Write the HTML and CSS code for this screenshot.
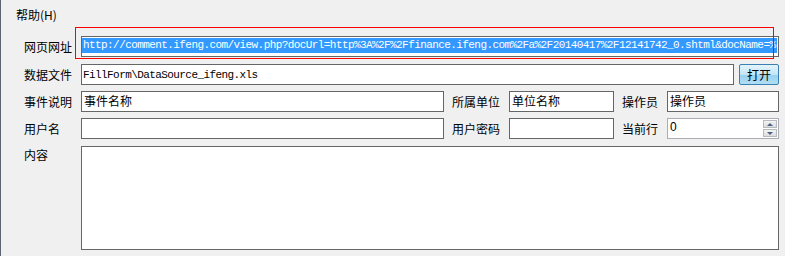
FILE: index.html
```html
<!DOCTYPE html>
<html lang="zh">
<head>
    <meta charset="UTF-8">
    <title>网页填表</title>
    <link rel="stylesheet" href="styles.css">
</head>
<body>

    <div class="menu-bar">
        <span class="menu-item">帮助(H)</span>
    </div>

    <div class="form">
        <div class="row">
            <label class="label">网页网址</label>
            <div class="field url-field"><span class="selected">http://comment.ifeng.com/view.php?docUrl=http%3A%2F%2Ffinance.ifeng.com%2Fa%2F20140417%2F12141742_0.shtml&amp;docName=%</span></div>
        </div>

        <div class="row row-gap">
            <label class="label">数据文件</label>
            <input class="field mono file-field" type="text" value="FillForm\DataSource_ifeng.xls">
            <button class="open-btn">打开</button>
        </div>

        <div class="row">
            <label class="label">事件说明</label>
            <input class="field cn wide" type="text" value="事件名称">
            <label class="label side-label">所属单位</label>
            <input class="field cn mid" type="text" value="单位名称">
            <label class="label side-label short">操作员</label>
            <input class="field cn narrow" type="text" value="操作员">
        </div>

        <div class="row">
            <label class="label">用户名</label>
            <input class="field cn wide" type="text">
            <label class="label side-label">用户密码</label>
            <input class="field cn mid" type="password">
            <label class="label side-label short">当前行</label>
            <div class="spinner">
                <span class="spinner-value">0</span>
                <div class="spinner-btns">
                    <div class="spin-btn"><span class="arrow-up"></span></div>
                    <div class="spin-btn"><span class="arrow-down"></span></div>
                </div>
            </div>
        </div>

        <div class="row content-row row-gap">
            <label class="label top-label">内容</label>
            <textarea class="content"></textarea>
        </div>
    </div>

    <div class="highlight-box"></div>

</body>
</html>
```

FILE: styles.css
```css
* {
    box-sizing: border-box;
}

body {
    margin: 0;
    height: 256px;
    background: #f0f0f0;
    border-left: 1px solid #5b6470;
    font-family: "Noto Sans CJK SC", "Liberation Sans", sans-serif;
    font-size: 12px;
    color: #000;
    overflow: hidden;
    position: relative;
}

.menu-bar {
    height: 27px;
    padding: 8px 0 0 15px;
    line-height: 14px;
}

.form {
    display: flex;
    flex-direction: column;
    gap: 6px;
    padding: 9px 0 0 23px;
}

.row {
    display: flex;
    align-items: center;
    height: 21px;
}

.row-gap {
    margin-top: 1px;
}

.label {
    width: 57px;
    flex-shrink: 0;
    line-height: 21px;
    white-space: nowrap;
}

.side-label {
    margin-left: 8px;
}

.side-label.short {
    width: 45px;
}

.field {
    height: 21px;
    border: 1px solid #666;
    background: #fff;
    margin: 0;
    padding: 0 1px;
    outline: none;
    flex-shrink: 0;
}

.mono,
.url-field {
    font-family: "Liberation Mono", "DejaVu Sans Mono", monospace;
    font-size: 11px;
    letter-spacing: -0.58px;
}

.cn {
    font-family: "Noto Sans CJK SC", sans-serif;
    font-size: 12px;
    padding: 0 2px 3px;
}

.url-field {
    width: 698px;
    white-space: nowrap;
    overflow: hidden;
    padding: 1px 1px 0 0;
}

.selected {
    display: block;
    background: #3399ff;
    color: #fff;
    line-height: 15px;
    padding-left: 1px;
}

.file-field {
    width: 653px;
}

.open-btn {
    width: 40px;
    height: 21px;
    margin-left: 5px;
    border: 1px solid #3c7fb1;
    border-radius: 2px;
    background: linear-gradient(#e5f4fc, #c4e5f6 50%, #98d1ef 51%, #b0def4);
    font-family: "Noto Sans CJK SC", sans-serif;
    font-size: 12px;
    padding: 0;
    line-height: 18px;
}

.wide {
    width: 363px;
}

.mid {
    width: 105px;
}

.narrow {
    width: 112px;
}

.spinner {
    width: 112px;
    height: 21px;
    border: 1px solid #abadb3;
    background: #fff;
    display: flex;
    justify-content: space-between;
    padding: 1px 1px 1px 2px;
}

.spinner-value {
    font-family: "Liberation Sans", sans-serif;
    font-size: 12px;
    line-height: 14px;
}

.spinner-btns {
    width: 14px;
    display: flex;
    flex-direction: column;
    gap: 1px;
}

.spin-btn {
    flex: 1;
    border: 1px solid #b5b9c0;
    background: linear-gradient(#f4f4f4, #dcdcdc);
    display: flex;
    align-items: center;
    justify-content: center;
}

.arrow-up,
.arrow-down {
    width: 0;
    height: 0;
    border-left: 3px solid transparent;
    border-right: 3px solid transparent;
}

.arrow-up {
    border-bottom: 3px solid #4d6185;
}

.arrow-down {
    border-top: 3px solid #4d6185;
}

.content-row {
    height: 104px;
    align-items: flex-start;
}

.top-label {
    line-height: 17px;
}

.content {
    width: 698px;
    height: 104px;
    border: 1px solid #666;
    resize: none;
    margin: 0;
    outline: none;
    background: #fff;
}

.highlight-box {
    position: absolute;
    left: 74px;
    top: 27px;
    width: 699px;
    height: 32px;
    border: 1px solid #ff0000;
    pointer-events: none;
}
```
